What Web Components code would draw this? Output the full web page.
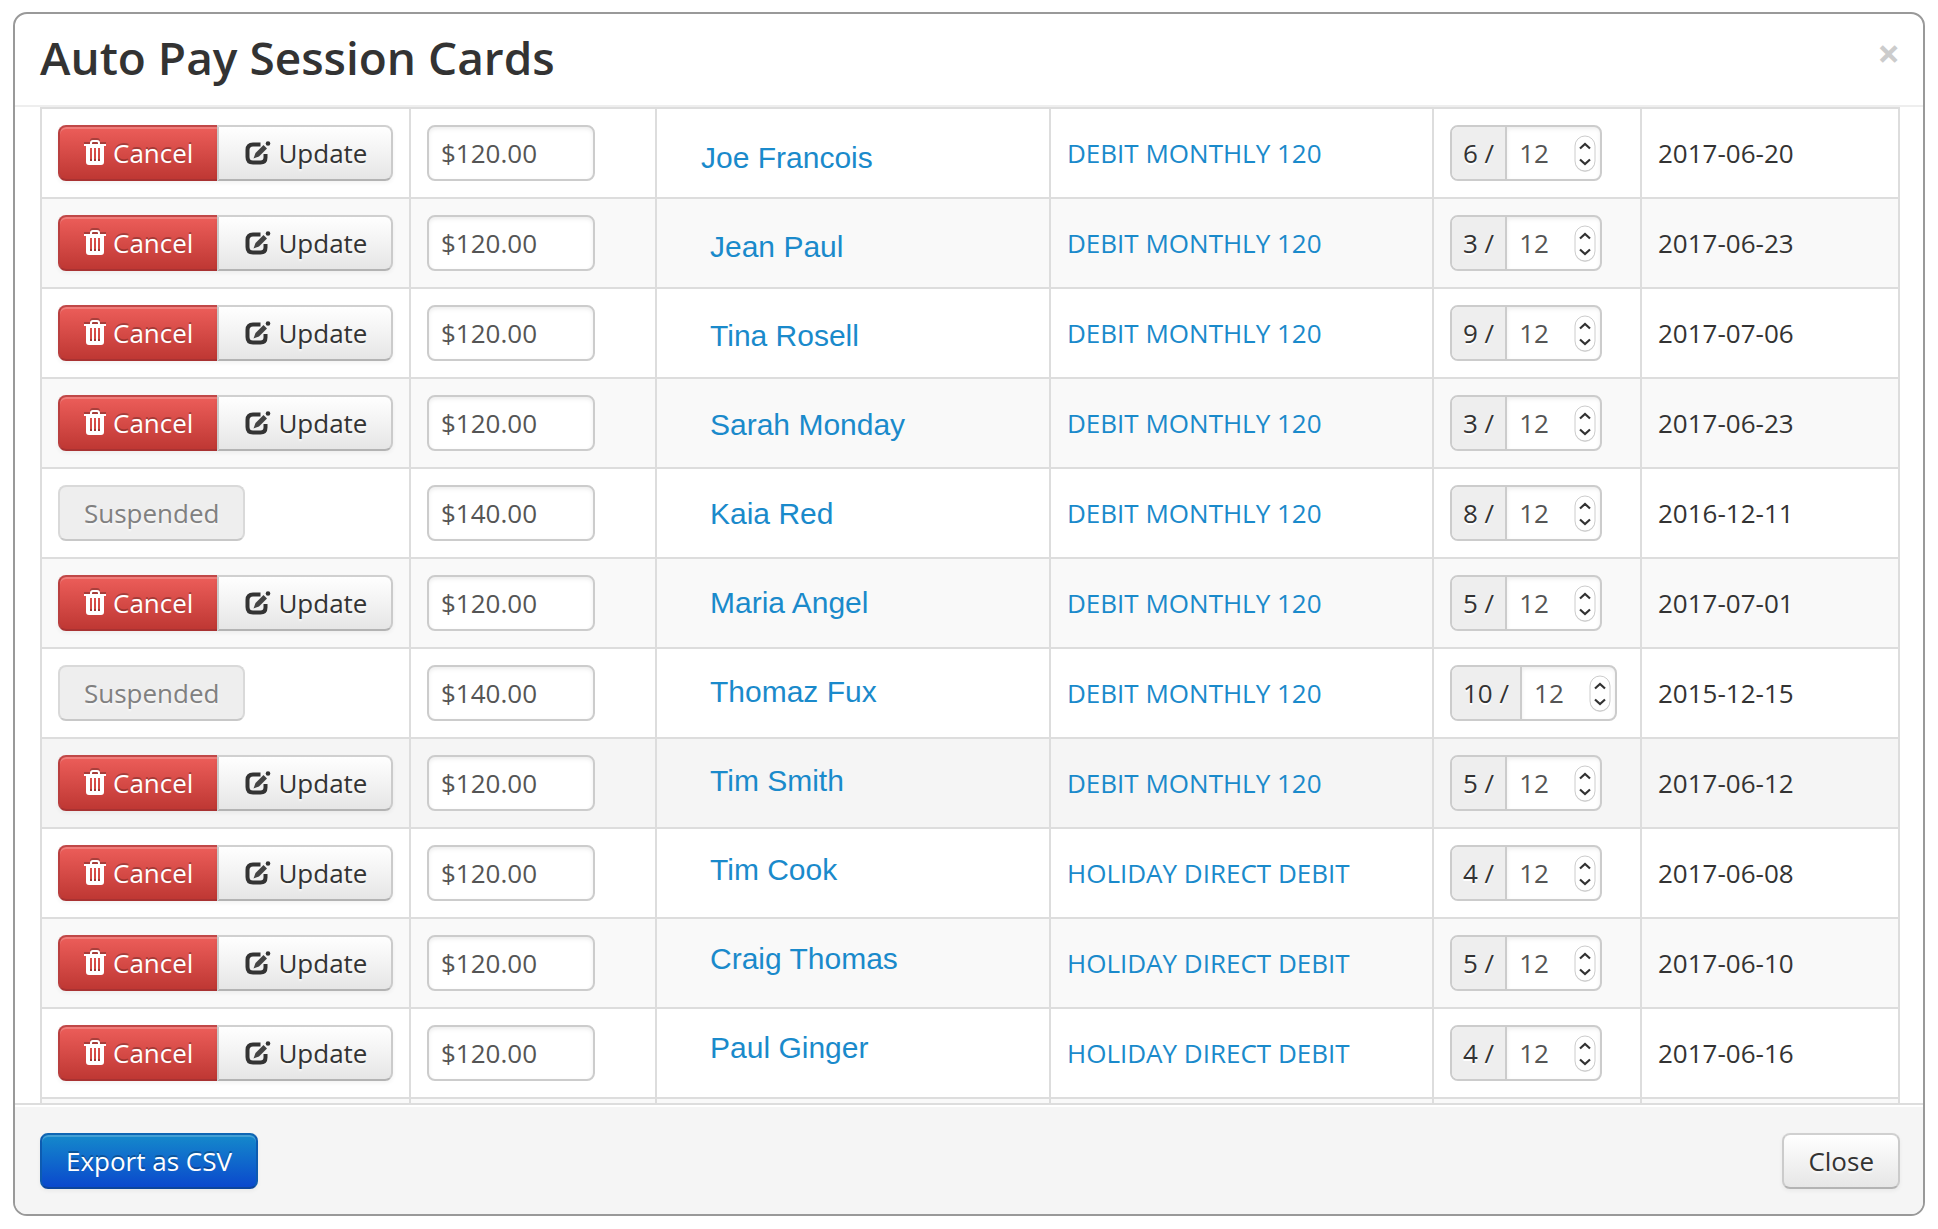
<!DOCTYPE html>
<html lang="en">
<head>
<meta charset="utf-8">
<title>Auto Pay Session Cards</title>
<style>
  html, body { margin: 0; background: #fff; }
  body {
    box-sizing: border-box;
    height: 100vh;
    padding: 12px 13px 13px;
    font: 26px/36px "Open Sans", "Noto Sans", sans-serif;
    color: #333;
  }
</style>
</head>
<body>
<modal-dialog>
  <span slot="title">Auto Pay Session Cards</span>
  <session-table></session-table>
  <push-button slot="footer" kind="primary">Export as CSV</push-button>
  <push-button slot="footer">Close</push-button>
</modal-dialog>

<script>
const define = (name, html, init) => {
  const template = document.createElement('template');
  template.innerHTML = html;
  customElements.define(name, class extends HTMLElement {
    connectedCallback() {
      if (this.shadowRoot) return;
      const root = this.attachShadow({ mode: 'open' });
      root.append(template.content.cloneNode(true));
      if (init) init(this, root);
    }
  });
};

define('trash-icon', `
<style>:host{display:inline-flex} svg{filter:drop-shadow(0 -2px 0 rgba(0,0,0,.25))}</style>
<svg width="22" height="26" viewBox="0 0 22 26" aria-hidden="true">
  <path fill="#fff" fill-rule="evenodd" d="M0 5V4h6V3q0-3 3-3h4q3 0 3 3v1h6v2h-2v16q0 3-3 3H5q-3 0-3-3V6H0zM8 4h6V3q0-1-1-1H9Q8 2 8 3zM6 8v13h2V8zm4 0v13h2V8zm4 0v13h2V8z"/>
</svg>`);

define('edit-icon', `
<style>:host{display:inline-flex}</style>
<svg width="28" height="26" viewBox="-2 -1 28 26" aria-hidden="true">
  <path fill="none" stroke="#333" stroke-width="4" d="M15.500 3.500H8Q2.500 3.500 2.500 9v7q0 5.500 5.500 5.500h7.500q5 0 5-5V13"/>
  <path fill="#444" d="M8.500 17.500l2-5.500L18.500 4l3.500 3.500-8 8z"/>
  <circle cx="23" cy="2.500" r="2.300" fill="#333"/>
</svg>`);

define('push-button', `
<style>
  :host { display: inline-flex; }
  button {
    box-sizing: border-box; height: 56px; margin: 0; padding: 0 24px;
    display: inline-flex; align-items: center; gap: 7px;
    font: inherit; color: #333; white-space: nowrap;
    border: 2px solid; border-color: #d0d0d0 #cbcbcb #b3b3b3; border-radius: 8px;
    background: linear-gradient(#fff, #e6e6e6);
    text-shadow: 0 2px 2px rgba(255,255,255,.75);
    box-shadow: inset 0 2px 0 rgba(255,255,255,.2), 0 2px 4px rgba(0,0,0,.05);
  }
  :host([kind=primary]) button {
    color: #fff; text-shadow: 0 -2px 0 rgba(0,0,0,.25);
    border-color: #0f66b3 #0d5bb0 #0c459c;
    background: linear-gradient(#158ccb, #0a46cd) border-box;
  }
  :host([kind=danger]) button {
    color: #fff; text-shadow: 0 -2px 0 rgba(0,0,0,.25);
    border-color: #c04848 #b83f3f #a93232;
    background: linear-gradient(#ee5f5b, #bd3632) border-box;
  }
  :host([join=right]) button { border-right: 0; border-radius: 8px 0 0 8px; }
  :host([join=left]) button { border-radius: 0 8px 8px 0; }
  button:disabled { color: #808080; background: #eee; border-color: #d9d9d9 #d9d9d9 #c8c8c8; box-shadow: none; }
</style>
<button type="button"><slot></slot></button>`, (host, root) => {
  root.querySelector('button').disabled = host.hasAttribute('disabled');
});

define('amount-field', `
<style>
  :host { display: block; }
  input {
    display: block; box-sizing: border-box; width: 168px; height: 56px; margin: 0; padding: 0 12px;
    font: inherit; color: #555; background: #fff;
    border: 2px solid #ccc; border-radius: 8px; box-shadow: inset 0 2px 4px rgba(0,0,0,.075);
  }
</style>
<input type="text" aria-label="Amount">`, (host, root) => {
  root.querySelector('input').value = host.getAttribute('value');
});

define('cycle-field', `
<style>
  :host { display: flex; }
  .group {
    box-sizing: border-box; height: 56px; display: flex; align-items: stretch; overflow: hidden;
    border: 2px solid #ccc; border-radius: 8px; background: #fff;
  }
  label { padding: 0 11px; line-height: 52px; background: #eee; border-right: 2px solid #ccc; text-shadow: 0 2px 0 #fff; white-space: nowrap; }
  .entry { display: flex; align-items: center; width: 93px; box-shadow: inset 0 2px 4px rgba(0,0,0,.075); }
  input {
    appearance: textfield; flex: 1; min-width: 0; margin: 0; padding: 0 0 0 12px; height: 52px; border: 0;
    font: inherit; color: #555; background: none; outline: 0;
  }
  input::-webkit-inner-spin-button { appearance: none; margin: 0; }
  svg { flex: none; margin-right: 4px; }
</style>
<div class="group">
  <label for="total"></label>
  <div class="entry">
    <input id="total" type="number">
    <svg width="22" height="40" viewBox="0 0 22 40" aria-hidden="true">
      <rect x="1" y="4" width="20" height="35" rx="10" fill="#bbb" opacity=".5"/>
      <rect x="1" y="3" width="20" height="35" rx="10" fill="#fff" stroke="#ccc"/>
      <path d="M6 15.500l5-4.500 5 4.500M6 26.500l5 4.500 5-4.500" fill="none" stroke="#333" stroke-width="2.200"/>
    </svg>
  </div>
</div>`, (host, root) => {
  root.querySelector('label').textContent = host.getAttribute('done') + ' /';
  root.querySelector('input').value = host.getAttribute('total');
});

const sessions = [
  ['120', 'Joe Francois', 'DEBIT MONTHLY 120', 6, '2017-06-20'],
  ['120', 'Jean Paul', 'DEBIT MONTHLY 120', 3, '2017-06-23'],
  ['120', 'Tina Rosell', 'DEBIT MONTHLY 120', 9, '2017-07-06'],
  ['120', 'Sarah Monday', 'DEBIT MONTHLY 120', 3, '2017-06-23'],
  ['140', 'Kaia Red', 'DEBIT MONTHLY 120', 8, '2016-12-11', 'suspended'],
  ['120', 'Maria Angel', 'DEBIT MONTHLY 120', 5, '2017-07-01'],
  ['140', 'Thomaz Fux', 'DEBIT MONTHLY 120', 10, '2015-12-15', 'suspended'],
  ['120', 'Tim Smith', 'DEBIT MONTHLY 120', 5, '2017-06-12', 'active'],
  ['120', 'Tim Cook', 'HOLIDAY DIRECT DEBIT', 4, '2017-06-08'],
  ['120', 'Craig Thomas', 'HOLIDAY DIRECT DEBIT', 5, '2017-06-10'],
  ['120', 'Paul Ginger', 'HOLIDAY DIRECT DEBIT', 4, '2017-06-16']
];

define('session-table', `
<style>
  :host { display: block; }
  table { width: 100%; table-layout: fixed; border-collapse: separate; border-spacing: 0; border-right: 2px solid #ddd; }
  .actions { width: 369px; } .amount { width: 246px; } .plan { width: 383px; } .cycle { width: 208px; } .date { width: 258px; }
  td { box-sizing: border-box; height: 90px; padding: 16px; border: 0 solid #ddd; border-width: 2px 0 0 2px; vertical-align: middle; white-space: nowrap; }
  tr:nth-child(even) td { background: #f9f9f9; }
  tr.active td { background: #f5f5f5; }
  .buttons { display: flex; }
  a { color: #1a8acb; text-decoration: none; }
  .name { padding: 0 0 0 53px; font: 30px/34px "Liberation Sans", Arial, sans-serif; }
  tr:first-child .name { padding-left: 44px; }
  .name a { display: block; padding: 10px 0 calc(var(--row) * 2px); }
</style>
<table aria-label="Session cards">
  <colgroup><col class="actions"><col class="amount"><col><col class="plan"><col class="cycle"><col class="date"></colgroup>
  <tbody></tbody>
</table>`, (host, root) => {
  root.querySelector('tbody').innerHTML = sessions.map(([amount, name, plan, done, date, state], row) => `
    <tr class="${state || ''}" style="--row:${row}">
      <td><div class="buttons">${state === 'suspended'
        ? '<push-button disabled>Suspended</push-button>'
        : '<push-button kind="danger" join="right"><trash-icon></trash-icon>Cancel</push-button><push-button join="left"><edit-icon></edit-icon>Update</push-button>'}</div></td>
      <td><amount-field value="$${amount}.00"></amount-field></td>
      <td class="name"><a href="#">${name}</a></td>
      <td><a href="#">${plan}</a></td>
      <td><cycle-field done="${done}" total="12"></cycle-field></td>
      <td>${date}</td>
    </tr>`).join('') + '<tr><td></td><td></td><td></td><td></td><td></td><td></td></tr>';
});

define('modal-dialog', `
<style>
  :host {
    box-sizing: border-box; height: 100%; display: flex; flex-direction: column; overflow: hidden;
    border: 2px solid #999; border-radius: 14px; background: #fff;
  }
  header { display: flex; justify-content: space-between; align-items: center; height: 85px; padding: 0 23px 6px 25px; border-bottom: 2px solid #eee; }
  h3 { margin: 0; font-size: 46px; line-height: 80px; font-weight: 600; }
  header button { margin: 0; padding: 0 0 8px; border: 0; background: none; font: 700 40px/40px "Open Sans", sans-serif; color: #ccc; }
  main { flex: 1; min-height: 0; overflow: hidden; padding: 0 23px 0 25px; }
  footer {
    display: flex; justify-content: space-between; padding: 28px 23px 25px 25px;
    border-top: 2px solid #ddd; background: #f5f5f5; box-shadow: inset 0 2px 0 #fff;
  }
</style>
<header><h3><slot name="title"></slot></h3><button type="button" aria-label="Dismiss">×</button></header>
<main><slot></slot></main>
<footer><slot name="footer"></slot></footer>`);
</script>
</body>
</html>
